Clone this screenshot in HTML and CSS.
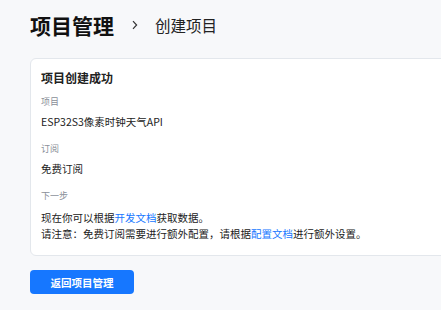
FILE: index.html
```html
<!DOCTYPE html>
<html lang="zh-CN">
<head>
    <meta charset="UTF-8">
    <meta name="viewport" content="width=device-width, initial-scale=1.0">
    <title>创建项目</title>
    <link rel="stylesheet" href="styles.css">
</head>
<body>

    <div class="page">
        <div class="page-header">
            <h1 class="page-title">项目管理</h1>
            <svg class="crumb-arrow" width="8" height="10" viewBox="0 0 8 10">
                <path d="M2 1.2 L5.6 5 L2 8.8" fill="none" stroke="#333" stroke-width="1.2"/>
            </svg>
            <span class="page-sub">创建项目</span>
        </div>

        <div class="result-card">
            <div class="card-title">项目创建成功</div>

            <div class="field first">
                <div class="field-label">项目</div>
                <div class="field-value">ESP32S3像素时钟天气API</div>
            </div>

            <div class="field">
                <div class="field-label">订阅</div>
                <div class="field-value">免费订阅</div>
            </div>

            <div class="field">
                <div class="field-label">下一步</div>
                <div class="field-text">
                    <p>现在你可以根据<a href="#">开发文档</a>获取数据。</p>
                    <p>请注意：免费订阅需要进行额外配置，请根据<a href="#">配置文档</a>进行额外设置。</p>
                </div>
            </div>
        </div>

        <button class="back-btn">返回项目管理</button>
    </div>

</body>
</html>
```

FILE: styles.css
```css
* {
    box-sizing: border-box;
    margin: 0;
    padding: 0;
}

body {
    font-family: 'Noto Sans CJK SC', 'Noto Sans', sans-serif;
    background-color: #f7f8fa;
    color: #222;
    overflow: hidden;
}

.page {
    padding: 10px 0 0 30px;
}

.page-header {
    display: flex;
    align-items: center;
    height: 30px;
}

.page-title {
    font-size: 21px;
    font-weight: bold;
    line-height: 30px;
    color: #111;
}

.crumb-arrow {
    margin: 0 16px 0 17px;
}

.page-sub {
    font-size: 15.5px;
    color: #222;
}

.result-card {
    width: 480px;
    margin-top: 18px;
    padding: 10px 10px 13px;
    background: #fff;
    border: 1px solid #e3e7ec;
    border-radius: 6px;
}

.card-title {
    font-size: 12px;
    font-weight: bold;
    line-height: 18px;
    color: #222;
}

.field {
    margin-top: 12px;
}

.field.first {
    margin-top: 8px;
}

.field-label {
    font-size: 9px;
    line-height: 14px;
    color: #8a8f99;
    margin-bottom: 5px;
}

.field-value,
.field-text p {
    font-size: 10.5px;
    line-height: 16px;
    color: #222;
}

.field-text {
    padding-top: 2px;
}

.field-text a {
    color: #1677ff;
    text-decoration: none;
}

.back-btn {
    display: block;
    width: 104px;
    height: 24px;
    margin-top: 14px;
    background: #1677ff;
    color: #fff;
    border: none;
    border-radius: 4px;
    font-family: inherit;
    font-size: 10.5px;
    font-weight: bold;
}
```
